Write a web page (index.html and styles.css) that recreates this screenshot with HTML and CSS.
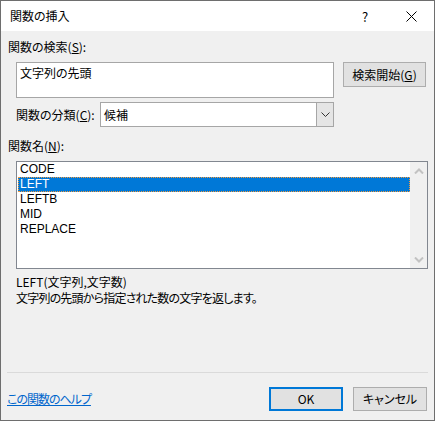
FILE: index.html
```html
<!DOCTYPE html>
<html lang="ja">
<head>
<meta charset="utf-8">
<title>関数の挿入</title>
<link rel="stylesheet" href="styles.css">
</head>
<body>
<div class="window">
  <div class="titlebar">
    <span class="title">関数の挿入</span>
    <span class="tb-btn help">?</span>
    <span class="tb-btn close">
      <svg width="11" height="11" viewBox="0 0 11 11"><path d="M0.5 0.5 L10.5 10.5 M10.5 0.5 L0.5 10.5" stroke="#000" stroke-width="1" fill="none"/></svg>
    </span>
  </div>
  <div class="content">
    <div class="label">関数の検索(<u>S</u>):</div>
    <div class="search-row">
      <div class="textbox">文字列の先頭</div>
      <div class="button">検索開始(<u>G</u>)</div>
    </div>
    <div class="cat-row">
      <span class="cat-label">関数の分類(<u>C</u>):</span>
      <div class="combo">
        <span class="combo-text">候補</span>
        <span class="combo-btn">
          <svg width="9" height="5" viewBox="0 0 9 5"><path d="M0.5 0.5 L4.5 4.5 L8.5 0.5" stroke="#333" stroke-width="1" fill="none"/></svg>
        </span>
      </div>
    </div>
    <div class="label names">関数名(<u>N</u>):</div>
    <div class="listbox">
      <ul class="items">
        <li>CODE</li>
        <li class="selected">LEFT</li>
        <li>LEFTB</li>
        <li>MID</li>
        <li>REPLACE</li>
      </ul>
      <div class="scrollbar">
        <svg width="10" height="6" viewBox="0 0 10 6"><path d="M1 5.5 L5 1.5 L9 5.5" stroke="#c2c2c2" stroke-width="2" fill="none"/></svg>
        <svg width="10" height="6" viewBox="0 0 10 6"><path d="M1 0.5 L5 4.5 L9 0.5" stroke="#c2c2c2" stroke-width="2" fill="none"/></svg>
      </div>
    </div>
    <div class="desc">
      <div>LEFT(文字列,文字数)</div>
      <div class="desc-text">文字列の先頭から指定された数の文字を返します。</div>
    </div>
    <div class="spacer"></div>
    <div class="separator"></div>
    <div class="footer">
      <a class="help-link">この関数のヘルプ</a>
      <div class="buttons">
        <div class="button default">OK</div>
        <div class="button">キャンセル</div>
      </div>
    </div>
  </div>
</div>
</body>
</html>
```
FILE: styles.css
```css
* { box-sizing: border-box; }
html, body { margin: 0; padding: 0; }
body {
  font-family: "Noto Sans CJK JP", "Noto Sans", sans-serif;
  font-size: 12px;
  font-feature-settings: "palt";
  color: #000;
  background: #f0f0f0;
}
.window {
  width: 435px;
  height: 421px;
  border: 1px solid #6e6e6e;
  background: #f0f0f0;
  display: flex;
  flex-direction: column;
}
.titlebar {
  height: 30px;
  background: #fff;
  display: flex;
  align-items: center;
  flex-shrink: 0;
}
.title {
  padding-left: 9px;
  line-height: 16px;
  flex: 1;
}
.tb-btn {
  display: flex;
  align-items: center;
  justify-content: center;
  height: 30px;
}
.help { width: 46px; font-size: 13px; }
.close { width: 46px; }
.content {
  flex: 1;
  display: flex;
  flex-direction: column;
  padding: 0 6px 0 6px;
}
.label {
  line-height: 16px;
  padding-left: 1px;
  margin-top: 8px;
}
.label.names { margin-top: 11px; }
.search-row {
  display: flex;
  align-items: flex-start;
  margin-top: 7px;
  padding-left: 9px;
  gap: 9px;
}
.textbox {
  width: 318px;
  height: 36px;
  background: #fff;
  border: 1px solid #a6a6a6;
  padding: 2px 3px;
  line-height: 16px;
}
.button {
  height: 25px;
  background: #e1e1e1;
  border: 1px solid #adadad;
  display: flex;
  align-items: center;
  justify-content: center;
  line-height: 16px;
}
.search-row .button { width: 83px; }
.cat-row {
  display: flex;
  align-items: center;
  margin-top: 4px;
  padding-left: 9px;
}
.cat-label { width: 84px; line-height: 16px; }
.combo {
  width: 234px;
  height: 25px;
  background: #fff;
  border: 1px solid #a6a6a6;
  display: flex;
  align-items: stretch;
}
.combo-text {
  flex: 1;
  padding-left: 3px;
  display: flex;
  align-items: center;
}
.combo-btn {
  width: 17px;
  background: #e5e5e5;
  border-left: 1px solid #a6a6a6;
  display: flex;
  align-items: center;
  justify-content: center;
}
.listbox {
  margin-top: 7px;
  margin-left: 9px;
  height: 108px;
  background: #fff;
  border: 1px solid #828790;
  display: flex;
}
.items {
  list-style: none;
  margin: 0;
  padding: 0 0 0 1px;
  flex: 1;
  font-family: "Liberation Sans", "Noto Sans", sans-serif;
}
.items li {
  height: 15px;
  line-height: 15px;
  padding-left: 2px;
}
.items li.selected {
  background: #0078d7;
  color: #fff;
  outline: 1px dotted #f29a3d;
  outline-offset: -1px;
}
.scrollbar {
  width: 17px;
  background: #f0f0f0;
  display: flex;
  flex-direction: column;
  justify-content: space-between;
  align-items: center;
  padding: 6px 0 5px;
}
.desc {
  margin-top: 5px;
  padding-left: 9px;
  line-height: 16px;
}
.desc-text { letter-spacing: -0.8px; }
.spacer { flex: 1; }
.separator {
  height: 1px;
  background: #dadada;
}
.footer {
  display: flex;
  align-items: center;
  justify-content: space-between;
  margin-top: 14px;
  margin-bottom: 9px;
}
.help-link {
  color: #0066cc;
  text-decoration: underline;
  line-height: 16px;
  letter-spacing: -1px;
}
.buttons {
  display: flex;
  gap: 10px;
  padding-right: 1px;
}
.buttons .button {
  width: 74px;
  height: 24px;
}
.button.default {
  border: 2px solid #0078d7;
}
```
